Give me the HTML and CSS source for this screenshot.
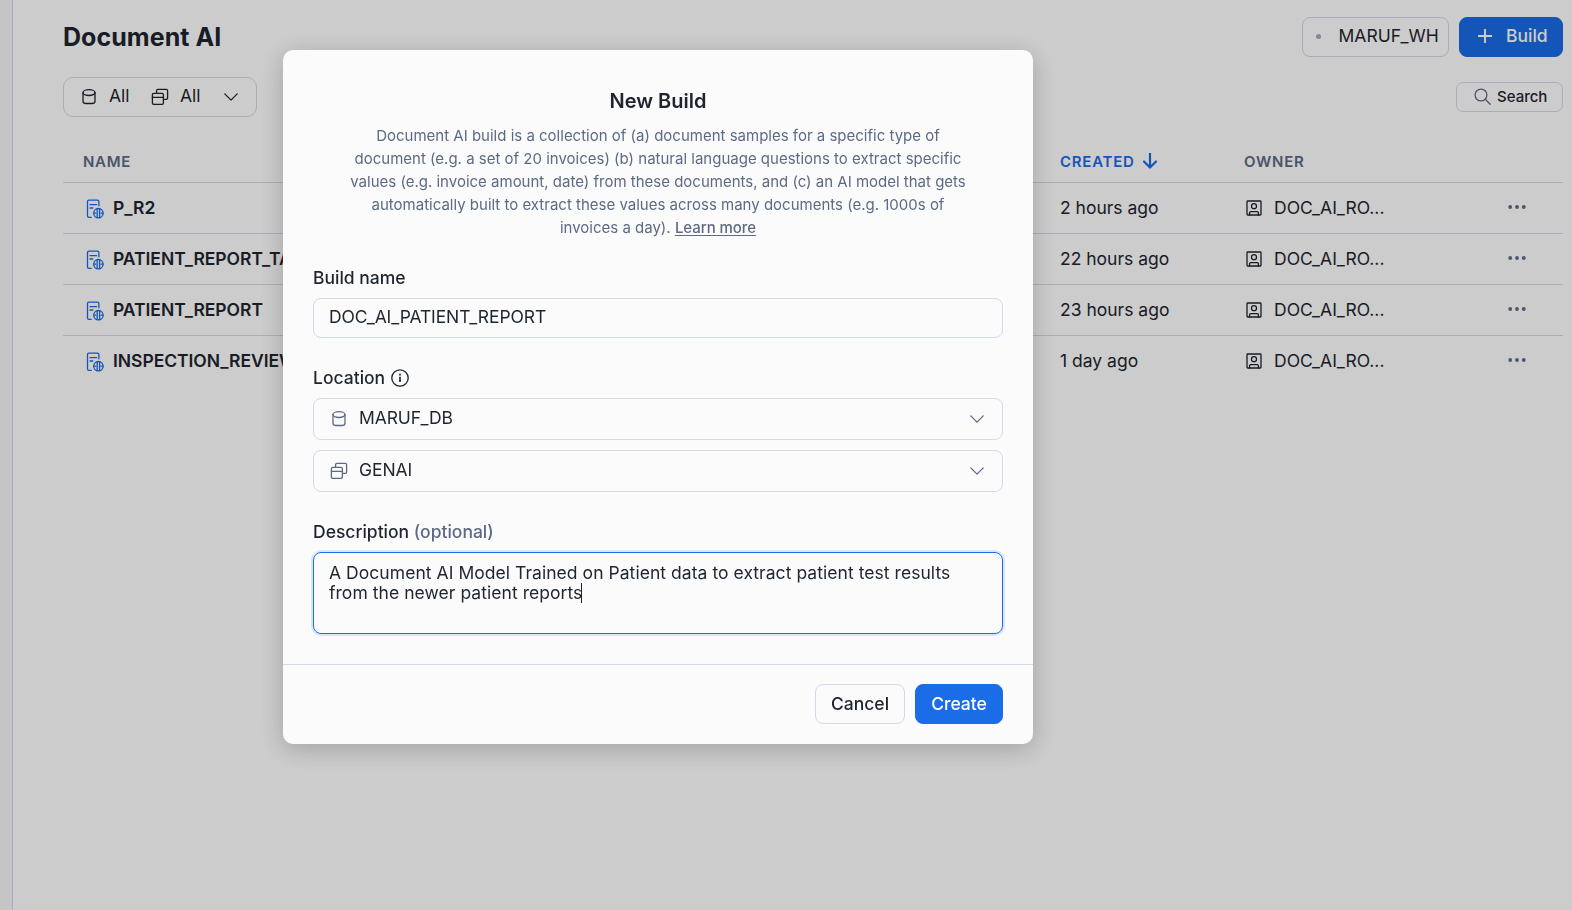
FILE: index.html
```
<!DOCTYPE html>
<html lang="en">
<head>
<meta charset="utf-8">
<title>Document AI</title>
<link rel="stylesheet" href="styles.css">
</head>
<body>
<svg width="0" height="0" class="defs" aria-hidden="true">
  <symbol id="db" viewBox="0 0 16 18"><ellipse cx="8" cy="4.6" rx="6" ry="2.9"/><path d="M2 4.6v8.600c0 1.500 1.200 2.300 3 2.300h6c1.800 0 3-.8 3-2.300V4.600"/></symbol>
  <symbol id="schema" viewBox="0 0 18 18"><path d="M5.600 5.200V2.800c0-.9.5-1.400 1.400-1.400h8.200c.9 0 1.400.5 1.400 1.400v7.100c0 .9-.5 1.400-1.400 1.400h-1.700"/><rect x="1.400" y="5.400" width="11" height="11" rx="1.400"/><path d="M1.400 9.400h11"/></symbol>
  <symbol id="chevron" viewBox="0 0 16 16"><path d="M1.800 4.900 8 11.100l6.200-6.200"/></symbol>
  <symbol id="doc" viewBox="0 0 18 20"><path d="M5.200 18.400H2.900c-.9 0-1.400-.5-1.400-1.400V2.600c0-.9.5-1.400 1.400-1.400h8.600c.9 0 1.400.5 1.400 1.400v4.200M4 5.700h6.600M4 9h2.800"/><circle cx="12.400" cy="14.200" r="4.700"/><path d="M11.200 9.900v8.600M13.600 9.900v8.600M7.900 14.200h1.700M15.200 14.200h1.700"/></symbol>
  <symbol id="owner" viewBox="0 0 16 16"><rect x="1" y="1" width="14" height="14" rx=".8"/><circle cx="8" cy="6.200" r="2.500"/><path d="M3.600 15v-2.300c0-.7.4-1.100 1.100-1.100h6.600c.7 0 1.100.4 1.100 1.100V15"/></symbol>
  <symbol id="more" viewBox="0 0 18 4"><circle cx="2.200" cy="2" r="1.900"/><circle cx="9" cy="2" r="1.900"/><circle cx="15.800" cy="2" r="1.900"/></symbol>
</svg>
<div class="app">
  <aside class="rail"></aside>
  <main class="main">
    <header class="topbar">
      <h1 class="title">Document AI</h1>
      <div class="actions">
        <button class="btn warehouse"><span class="dot"></span>MARUF_WH</button>
        <button class="btn primary build"><svg class="plus" viewBox="0 0 14 14"><path d="M7 0v14M0 7h14"/></svg>Build</button>
      </div>
    </header>
    <div class="toolbar">
      <div class="filter">
        <svg class="icon ic-db"><use href="#db"/></svg><span class="filter-db">All</span>
        <svg class="icon ic-schema"><use href="#schema"/></svg><span class="filter-schema">All</span>
        <svg class="icon ic-chev"><use href="#chevron"/></svg>
      </div>
      <div class="search"><svg class="icon ic-search" viewBox="0 0 17 17"><circle cx="7" cy="7" r="5.900"/><path d="m11.300 11.300 4.900 4.900"/></svg>Search</div>
    </div>
    <section class="table">
      <div class="row head"><span class="c-name">NAME</span><span class="c-created sorted">CREATED<svg class="arrow" viewBox="0 0 14 16"><path d="M7 .5v14M1 8.500l6 6 6-6"/></svg></span><span>OWNER</span></div>
      <div class="row"><span class="c-name"><svg class="icon ic-doc"><use href="#doc"/></svg>P_R2</span><span class="c-created">2 hours ago</span><span class="c-owner"><svg class="icon ic-owner"><use href="#owner"/></svg>DOC_AI_RO...</span><svg class="ic-more"><use href="#more"/></svg></div>
      <div class="row"><span class="c-name"><svg class="icon ic-doc"><use href="#doc"/></svg>PATIENT_REPORT_TABLE</span><span class="c-created">22 hours ago</span><span class="c-owner"><svg class="icon ic-owner"><use href="#owner"/></svg>DOC_AI_RO...</span><svg class="ic-more"><use href="#more"/></svg></div>
      <div class="row"><span class="c-name"><svg class="icon ic-doc"><use href="#doc"/></svg>PATIENT_REPORT</span><span class="c-created">23 hours ago</span><span class="c-owner"><svg class="icon ic-owner"><use href="#owner"/></svg>DOC_AI_RO...</span><svg class="ic-more"><use href="#more"/></svg></div>
      <div class="row"><span class="c-name"><svg class="icon ic-doc"><use href="#doc"/></svg>INSPECTION_REVIEWS</span><span class="c-created">1 day ago</span><span class="c-owner"><svg class="icon ic-owner"><use href="#owner"/></svg>DOC_AI_RO...</span><svg class="ic-more"><use href="#more"/></svg></div>
    </section>
  </main>
</div>
<div class="overlay">
  <div class="modal" role="dialog">
    <div class="modal-body">
      <h2 class="modal-title">New Build</h2>
      <p class="intro">Document AI build is a collection of (a) document samples for a specific type of<br>document (e.g. a set of 20 invoices) (b) natural language questions to extract specific<br>values (e.g. invoice amount, date) from these documents, and (c) an AI model that gets<br>automatically built to extract these values across many documents (e.g. 1000s of<br>invoices a day). <a class="link">Learn more</a></p>
      <div class="label">Build name</div>
      <div class="field input">DOC_AI_PATIENT_REPORT</div>
      <div class="label">Location<svg class="icon ic-info" viewBox="0 0 18 18"><circle cx="9" cy="9" r="8.200"/><path class="stem" d="M9 7.800v5.200"/><path class="stem" d="M9 4.800v1.600"/></svg></div>
      <div class="field select"><svg class="icon ic-db"><use href="#db"/></svg><span class="value">MARUF_DB</span><svg class="icon ic-chev"><use href="#chevron"/></svg></div>
      <div class="field select schema"><svg class="icon ic-schema"><use href="#schema"/></svg><span class="value">GENAI</span><svg class="icon ic-chev"><use href="#chevron"/></svg></div>
      <div class="label desc-label">Description <span class="optional">(optional)</span></div>
      <div class="field textarea">A Document AI Model Trained on Patient data to extract patient test results<br>from the newer patient reports<span class="caret"></span></div>
    </div>
    <footer class="modal-footer">
      <button class="btn cancel">Cancel</button>
      <button class="btn primary create">Create</button>
    </footer>
  </div>
</div>
</body>
</html>
```
FILE: styles.css
```
* { box-sizing: border-box; }
body { margin: 0; font-family: Inter, "Liberation Sans", sans-serif; font-size: 17.5px; color: #1e252f; background: #fff; overflow: hidden; }
h1, h2, p { margin: 0; }
.defs { position: absolute; }
.app { display: flex; height: 910px; }
.rail { width: 13px; background: #f7f7f7; border-right: 1px solid #d5daeb; }
.main { flex: 1; padding: 17px 9px 0 50px; }
.icon { fill: none; stroke: currentColor; stroke-width: 1.3; stroke-linecap: round; stroke-linejoin: round; flex: none; }
.topbar { display: flex; justify-content: space-between; align-items: center; height: 40px; }
.title { font-size: 25px; font-weight: 700; line-height: 40px; letter-spacing: .05px; }
.actions { display: flex; gap: 10px; }
.btn { display: flex; align-items: center; height: 40px; border: 1px solid #d5daeb; border-radius: 8px; background: transparent; font: 500 17.5px/38px Inter, "Liberation Sans", sans-serif; color: #1e252f; padding: 0; white-space: nowrap; }
.primary { background: #1a6ce7; border-color: #1a6ce7; color: #fff; }
.warehouse { width: 147px; padding: 0 0 2px 12.5px; font-weight: 400; }
.dot { width: 5px; height: 5px; border-radius: 50%; background: #9fabc1; margin-right: 18px; }
.build { width: 104px; padding: 0 0 2px 18px; gap: 14px; }
.plus { width: 14px; height: 14px; stroke: currentColor; stroke-width: 1.9; }
.toolbar { display: flex; justify-content: space-between; align-items: center; height: 40px; margin-top: 20px; }
.filter { display: flex; align-items: center; width: 194px; height: 40px; padding: 0 0 1px 17px; border: 1px solid #d5daeb; border-radius: 10px; }
.ic-db { width: 16px; height: 18px; }
.ic-schema { width: 18px; height: 18px; }
.ic-chev { width: 16px; height: 16px; }
.filter-db, .filter-schema { margin-top: -2px; }
.filter-db { width: 42px; margin-left: 12px; }
.filter-schema { width: 43px; margin-left: 11px; }
.search { display: flex; align-items: center; width: 107px; height: 30px; padding: 0 0 1px 17px; gap: 6px; border: 1px solid #d5daeb; border-radius: 7px; font-size: 15px; font-weight: 500; }
.ic-search { width: 17px; height: 17px; color: #5d6a85; }
.table { margin-top: 25px; }
.row { display: grid; grid-template-columns: 997px 184px 264px 18px; align-items: center; height: 51px; padding-bottom: 2px; border-bottom: 1px solid #d5daeb; }
.row:last-child { border-bottom: 0; height: 50px; }
.row.head { height: 41px; font-size: 15px; font-weight: 600; letter-spacing: .75px; color: #5d6a85; }
.c-name { display: flex; align-items: center; padding-left: 20px; font-weight: 600; letter-spacing: -.04px; }
.head .c-name { letter-spacing: .7px; }
.ic-doc { width: 18px; height: 20px; margin: 3px 9px 0 3px; color: #1a6ce7; }
.c-created, .c-owner { display: flex; align-items: center; }
.sorted { color: #1a6ce7; }
.arrow { width: 14px; height: 16px; margin-left: 8px; fill: none; stroke: currentColor; stroke-width: 2.2; stroke-linecap: round; }
.ic-owner { width: 16px; height: 16px; margin: 2px 12px 0 2px; }
.ic-more { width: 18px; height: 4px; fill: #5d6a85; }
.overlay { position: fixed; inset: 0; display: flex; align-items: flex-start; padding: 50px 0 0 283px; background: rgba(0, 0, 0, .2); }
.modal { width: 750px; height: 694px; border-radius: 10px; background: #fbfbfb; box-shadow: 0 5px 25px rgba(25, 30, 36, .24); }
.modal-body { height: 615px; padding: 38px 30px 0; border-bottom: 1px solid #d5daeb; }
.modal-title { font-size: 20px; line-height: 26px; font-weight: 600; text-align: center; }
.intro { margin-top: 10px; margin-bottom: 26px; font-size: 15px; line-height: 23px; color: #5d6a85; text-align: center; white-space: nowrap; }
.link { font-weight: 500; text-decoration: underline; text-underline-offset: 2px; letter-spacing: -.05px; }
.label { display: flex; align-items: center; height: 25px; margin-bottom: 8px; font-weight: 500; white-space: pre; }
.field { border: 1px solid #d5daeb; border-radius: 8px; padding: 0 15px; }
.input { height: 40px; line-height: 36px; margin-bottom: 27px; letter-spacing: -.11px; }
.ic-info { width: 18px; height: 18px; margin-left: 6px; }
.stem { stroke-width: 1.7; stroke-linecap: butt; }
.select { display: flex; align-items: center; height: 42px; margin-bottom: 10px; padding: 0 17px; color: #5d6a85; }
.schema { padding-left: 16px; }
.value { flex: 1; margin-left: 12px; margin-top: -3px; color: #1e252f; letter-spacing: -.1px; }
.schema .value { margin-left: 11px; }
.desc-label { margin-top: 27px; }
.optional { color: #5d6a85; }
.textarea { height: 82px; padding-top: 10px; line-height: 20px; letter-spacing: .05px; border-color: #1a6ce7; box-shadow: 0 0 0 2px #d9e6fb; }
.caret { display: inline-block; width: 1px; height: 20px; margin-left: -1px; background: #1e252f; vertical-align: -4px; }
.modal-footer { display: flex; justify-content: flex-end; gap: 10px; padding: 19px 30px 0; }
.cancel, .create { justify-content: center; }
.cancel { width: 90px; }
.create { width: 88px; }
```
